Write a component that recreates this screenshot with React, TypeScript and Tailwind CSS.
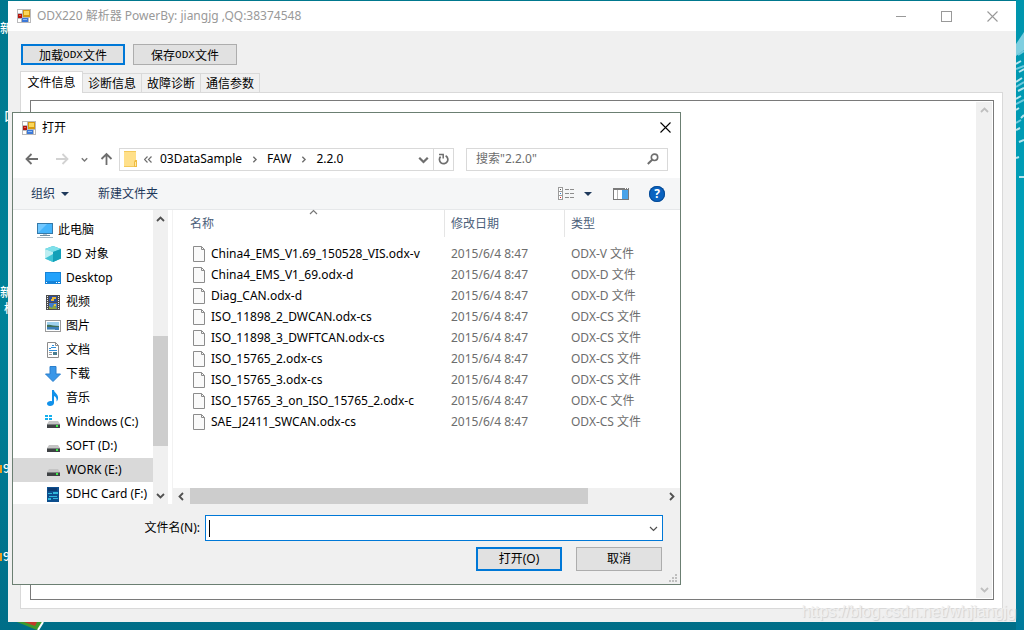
import { useState } from 'react';
import type { ReactNode } from 'react';

const TABS = ['文件信息', '诊断信息', '故障诊断', '通信参数'];

const FILES = [
  { name: 'China4_EMS_V1.69_150528_VIS.odx-v', type: 'ODX-V 文件' },
  { name: 'China4_EMS_V1_69.odx-d', type: 'ODX-D 文件' },
  { name: 'Diag_CAN.odx-d', type: 'ODX-D 文件' },
  { name: 'ISO_11898_2_DWCAN.odx-cs', type: 'ODX-CS 文件' },
  { name: 'ISO_11898_3_DWFTCAN.odx-cs', type: 'ODX-CS 文件' },
  { name: 'ISO_15765_2.odx-cs', type: 'ODX-CS 文件' },
  { name: 'ISO_15765_3.odx-cs', type: 'ODX-CS 文件' },
  { name: 'ISO_15765_3_on_ISO_15765_2.odx-c', type: 'ODX-C 文件' },
  { name: 'SAE_J2411_SWCAN.odx-cs', type: 'ODX-CS 文件' },
];

const MODIFIED = '2015/6/4 8:47';

/* ---------- icons ---------- */

const FormIcon = () => (
  <svg width="14" height="14" viewBox="0 0 14 14" className="shrink-0">
    <rect width="14" height="14" fill="#b9b9bb" />
    <rect x="1" y="1" width="4" height="3" fill="#fff" />
    <rect x="1" y="10" width="3" height="3" fill="#fff" />
    <rect x="12" y="9" width="1" height="4" fill="#fff" />
    <rect x="6" y="1" width="7" height="7" fill="#d69a10" />
    <rect x="7" y="2" width="5" height="4" fill="#fbd75a" />
    <rect x="1" y="5" width="4" height="4" fill="#b3140f" />
    <rect x="2" y="6" width="2" height="1" fill="#e8604f" />
    <rect x="5" y="9" width="6" height="4" fill="#3b78d8" />
    <rect x="6" y="10" width="4" height="1" fill="#8fbcf5" />
  </svg>
);

type ChevronProps = { dir: 'up' | 'down' | 'left' | 'right'; color?: string; size?: number; weight?: number };

const Chevron = ({ dir, color = '#505050', size = 9, weight = 1.8 }: ChevronProps) => {
  const paths = {
    up: 'M1 6 L4.500 2.500 L8 6',
    down: 'M1 3 L4.500 6.500 L8 3',
    left: 'M6 1 L2.500 4.500 L6 8',
    right: 'M3 1 L6.500 4.500 L3 8',
  };
  return (
    <svg width={size} height={size} viewBox="0 0 9 9" className="shrink-0">
      <path d={paths[dir]} fill="none" stroke={color} strokeWidth={weight} />
    </svg>
  );
};

const DoubleChevron = () => (
  <svg width="8" height="7" viewBox="0 0 8 7" className="shrink-0">
    <path d="M3.500 .5l-3 3 3 3M7.500 .5l-3 3 3 3" fill="none" stroke="#6e6e6e" strokeWidth="1.200" />
  </svg>
);

const Caret = () => (
  <svg width="8" height="4" viewBox="0 0 8 4">
    <path d="M0 0h8L4 4z" fill="#1e395b" />
  </svg>
);

const CloseIcon = ({ color }: { color: string }) => (
  <svg width="11" height="11" viewBox="0 0 11 11">
    <path d="M.5 .5l10 10M10.500 .5l-10 10" stroke={color} strokeWidth="1.100" />
  </svg>
);

const NavArrow = ({ dir, color }: { dir: 'left' | 'right' | 'up'; color: string }) => {
  const paths = {
    left: 'M13 7H2M6.500 2L1.500 7l5 5',
    right: 'M0 7h11M6.500 2l5 5-5 5',
    up: 'M6.500 13V2M1.500 7l5-5 5 5',
  };
  return (
    <svg width="13" height="14" viewBox="0 0 13 14">
      <path d={paths[dir]} fill="none" stroke={color} strokeWidth="1.800" />
    </svg>
  );
};

const FolderIcon = () => (
  <svg width="14" height="16" viewBox="0 0 14 16" className="shrink-0">
    <path d="M0 0h12v9l1 1v6H0z" fill="#ffe08a" />
    <path d="M0 0h12v1H0zM0 15h13v1H0z" fill="#f3c95a" />
    <path d="M11 9h2v7h-3v-5z" fill="#f0bd42" />
    <path d="M11 11h1v4h-1z" fill="#ffe9ab" />
  </svg>
);

const RefreshIcon = () => (
  <svg width="11" height="12" viewBox="0 0 11 12">
    <path d="M2.600 3.600A4.200 4.200 0 1 0 7.600 2.800" fill="none" stroke="#6e6e6e" strokeWidth="1.700" />
    <path d="M1 1.500h4.200v4" fill="none" stroke="#6e6e6e" strokeWidth="1.500" />
  </svg>
);

const SearchIcon = () => (
  <svg width="12" height="12" viewBox="0 0 12 12">
    <circle cx="7.500" cy="4.300" r="3.200" fill="none" stroke="#6e6e6e" strokeWidth="1.600" />
    <path d="M5.200 6.800L.8 11" stroke="#6e6e6e" strokeWidth="2" />
  </svg>
);

const ViewIcon = () => (
  <svg width="16" height="13" viewBox="0 0 16 13">
    <rect x=".5" y=".5" width="4" height="12" fill="#fff" stroke="#9b9b9b" />
    <path d="M1 4.500h3M1 8.500h3" stroke="#9b9b9b" />
    <path d="M2 2h1v1H2z" fill="#555" />
    <path d="M2 6h1v1H2z" fill="#2d7dd2" />
    <path d="M2 10h1v1H2z" fill="#e02020" />
    <path d="M7 2.500h4M12 2.500h4M7 6.500h4M12 6.500h4M7 10.500h4M12 10.500h4" stroke="#8d8d8d" />
  </svg>
);

const PreviewIcon = () => (
  <svg width="16" height="12" viewBox="0 0 16 12">
    <rect x=".5" y=".5" width="15" height="11" fill="#fff" stroke="#7a7a7a" />
    <path d="M0 0h16v2H0z" fill="#7a7a7a" />
    <path d="M4.500 2v9" stroke="#b5b5b5" />
    <path d="M9 2h6v9H9z" fill="#4aa3e8" />
    <path d="M12 0h1v1h-1zM14 0h1v1h-1z" fill="#fff" />
  </svg>
);

const FileIcon = () => (
  <svg width="12" height="16" viewBox="0 0 12 16" className="shrink-0">
    <path d="M.5 .5h8l3 3v12H.5z" fill="#fafafa" stroke="#8c8c8c" />
    <path d="M8.500 .5v3h3" fill="none" stroke="#8c8c8c" />
  </svg>
);

const PcIcon = () => (
  <svg width="16" height="15" viewBox="0 0 16 15">
    <rect x=".5" y=".5" width="15" height="10" fill="#45b4fb" stroke="#3579a8" />
    <path d="M1 1h9L1 10z" fill="#72c8ff" />
    <path d="M6 11h4v1H6z" fill="#b9c6cf" />
    <path d="M3 12h10v1H3z" fill="#6f8ea3" />
    <path d="M0 14h16v1H0z" fill="#a8b7c2" />
  </svg>
);

const CubeIcon = () => (
  <svg width="16" height="16" viewBox="0 0 16 16">
    <path d="M8 0l8 3v9.500L8 16l-8-3.500V3z" fill="#29b5cb" />
    <path d="M0 3l8-3 8 3-8 3z" fill="#7fe0ea" />
    <path d="M0 3l8 3v10l-8-3.500z" fill="#bdeef2" />
    <path d="M0 12.500L8 8v8z" fill="#3ec3d5" />
    <path d="M16 3L8 6v10l8-3.500z" fill="#12a0b8" />
  </svg>
);

const DesktopIcon = () => (
  <svg width="16" height="12" viewBox="0 0 16 12">
    <rect width="16" height="12" fill="#1683d8" />
    <path d="M1 1h14v8H1z" fill="#22a2fb" />
    <path d="M1 10h1v1H1zM11 10h1v1h-1zM13 10h2v1h-2z" fill="#fff" />
  </svg>
);

const VideoIcon = () => (
  <svg width="14" height="15" viewBox="0 0 14 15">
    <rect width="14" height="15" fill="#4d4d4d" />
    <path d="M1.500 1v14M12.500 1v14" stroke="#eee" strokeDasharray="1 1" />
    <rect x="3" y="1" width="8" height="6" fill="#2c4f9c" />
    <rect x="3" y="8" width="8" height="6" fill="#3f7bd0" />
    <path d="M6 2h4v2H8v2H5V4h1z" fill="#eab838" />
    <path d="M3 14v-3l3 2 2-4 3 5z" fill="#8fa33a" />
    <path d="M8 9h2v2H8z" fill="#dcc04a" />
  </svg>
);

const PictureIcon = () => (
  <svg width="16" height="12" viewBox="0 0 16 12">
    <rect x=".5" y=".5" width="15" height="11" fill="#fff" stroke="#9a9a9a" />
    <rect x="2" y="2" width="12" height="8" fill="#9ed0ee" />
    <path d="M2 5c3-1 6 1 12 1v1H2z" fill="#3f6f56" />
    <path d="M2 7h12v3H2z" fill="#3d7fb8" />
    <path d="M2 9h8v1H2z" fill="#8db8d4" />
  </svg>
);

const DocIcon = () => (
  <svg width="12" height="16" viewBox="0 0 12 16">
    <path d="M.5 .5h8l3 3v12H.5z" fill="#fff" stroke="#8c8c8c" />
    <path d="M8.500 .5v3h3" fill="none" stroke="#8c8c8c" />
    <path d="M2 6.500h2M5 3.500h2M4 5.500h5M2 8.500h8" stroke="#3190dc" />
    <path d="M2 10.500h3M2 12.500h3" stroke="#999" />
    <path d="M6 10h4v3H6z" fill="#4a7d8f" />
  </svg>
);

const DownloadIcon = () => (
  <svg width="16" height="16" viewBox="0 0 16 16">
    <path d="M5 .5h6V8h4.500L8 15.500.5 8H5z" fill="#3a97e8" stroke="#2b7fcc" />
  </svg>
);

const MusicIcon = () => (
  <svg width="12" height="16" viewBox="0 0 12 16">
    <path d="M5 0h2c0 3 5 4 4 9-.2 1-.8 2-1.500 2.500C10 8.500 9 7 7 6v7c0 2-2 3-4 3s-3-1-3-2.500S2 11 3.500 11c.6 0 1 .1 1.500.2z" fill="#1191ea" />
  </svg>
);

const DriveIcon = ({ system }: { system?: boolean }) => (
  <svg width="16" height="14" viewBox="0 0 16 14">
    {system && (
      <path d="M0 0h3v2H0zM4 0h3v2H4zM0 3h3v2H0zM4 3h3v2H4z" fill="#16b0ee" />
    )}
    <path d="M4 6h9l2 3H2z" fill="#c4c4c4" />
    <rect x="2" y="9" width="13" height="4" fill="#3f4245" />
    <path d="M2 9h13v1H2z" fill="#7b7e80" />
    <path d="M11 10h2v2h-2z" fill="#3df04a" />
  </svg>
);

const CardIcon = () => (
  <svg width="12" height="15" viewBox="0 0 12 15">
    <path d="M0 0h12v15H0z" fill="#0d4f8e" />
    <path d="M1 1h9v3H1z" fill="#0a3a72" />
    <path d="M1 6h4v1H1zM6 5h5v2H6zM2 9h8v1H2zM1 11h3v2H1zM6 11h5v1H6z" fill="#32b8dd" />
  </svg>
);

/* ---------- sidebar ---------- */

const PLACES: { label: string; icon: ReactNode }[] = [
  { label: '3D 对象', icon: <CubeIcon /> },
  { label: 'Desktop', icon: <DesktopIcon /> },
  { label: '视频', icon: <VideoIcon /> },
  { label: '图片', icon: <PictureIcon /> },
  { label: '文档', icon: <DocIcon /> },
  { label: '下载', icon: <DownloadIcon /> },
  { label: '音乐', icon: <MusicIcon /> },
  { label: 'Windows (C:)', icon: <DriveIcon system /> },
  { label: 'SOFT (D:)', icon: <DriveIcon /> },
  { label: 'WORK (E:)', icon: <DriveIcon /> },
  { label: 'SDHC Card (F:)', icon: <CardIcon /> },
];

const Sidebar = () => {
  const [current, setCurrent] = useState('WORK (E:)');

  return (
    <div className="flex h-[294px] w-40 shrink-0 overflow-hidden border-r border-[#f2f2f2]">
      <ul className="h-full w-[140px] shrink-0 overflow-hidden pt-2">
        <li>
          <button className="flex h-6 w-full items-center gap-[5px] pl-6">
            <span className="flex w-4 justify-center"><PcIcon /></span>
            此电脑
          </button>
        </li>
        {PLACES.map((place) => (
          <li key={place.label}>
            <button
              onClick={() => setCurrent(place.label)}
              className={`flex h-6 w-full items-center gap-[5px] pl-8 whitespace-nowrap ${place.label === current ? 'bg-[#d9d9d9]' : ''}`}
            >
              <span className="flex w-4 shrink-0 justify-center">{place.icon}</span>
              {place.label}
            </button>
          </li>
        ))}
      </ul>
      <div className="flex w-[15px] shrink-0 flex-col items-center bg-[#f0f0f0]">
        <button aria-label="向上滚动" className="flex h-[18px] items-center"><Chevron dir="up" /></button>
        <div className="flex-1" />
        <div className="h-[110px] w-full bg-[#cdcdcd]" />
        <div className="h-10" />
        <button aria-label="向下滚动" className="flex h-[18px] items-center"><Chevron dir="down" /></button>
      </div>
    </div>
  );
};

/* ---------- file list ---------- */

const FileList = () => (
  <div className="flex min-w-0 flex-1 flex-col">
    <div className="flex-1">
      <table className="w-full table-fixed border-collapse text-left">
        <colgroup>
          <col className="w-[271px]" />
          <col className="w-[120px]" />
          <col />
        </colgroup>
        <thead className="text-[#4c607a]">
          <tr>
            <th className="p-0 pb-1.5 font-normal">
              <div className="relative flex h-[27px] items-center pl-[17px]">
                名称
                <span className="absolute -top-0.5 left-1/2"><Chevron dir="up" color="#777777" weight={1.2} /></span>
              </div>
            </th>
            <th className="p-0 pb-1.5 font-normal">
              <div className="flex h-[27px] items-center border-l border-[#e5e5e5] pl-1.5">修改日期</div>
            </th>
            <th className="p-0 pb-1.5 font-normal">
              <div className="flex h-[27px] items-center border-l border-[#e5e5e5] pl-1.5">类型</div>
            </th>
          </tr>
        </thead>
        <tbody>
          {FILES.map((file) => (
            <tr key={file.name} className="h-[21px]">
              <td className="p-0 pl-5">
                <div className="flex items-center gap-1.5 whitespace-nowrap">
                  <FileIcon />
                  {file.name}
                </div>
              </td>
              <td className="p-0 pl-[7px] text-[#6d6d6d]">{MODIFIED}</td>
              <td className="p-0 pl-[7px] text-[#6d6d6d]">{file.type}</td>
            </tr>
          ))}
        </tbody>
      </table>
    </div>
    <div className="flex h-4 bg-[#f0f0f0]">
      <button aria-label="向左滚动" className="flex w-[17px] items-center justify-center"><Chevron dir="left" /></button>
      <div className="w-[398px] bg-[#cdcdcd]" />
      <div className="flex-1" />
      <button aria-label="向右滚动" className="flex w-[17px] items-center justify-center"><Chevron dir="right" /></button>
    </div>
  </div>
);

/* ---------- open dialog ---------- */

const OpenDialog = () => {
  const [fileName, setFileName] = useState('');
  const [search, setSearch] = useState('');

  return (
    <div
      role="dialog"
      aria-label="打开"
      className="absolute top-28 left-3 flex w-[669px] flex-col border border-[#6b7f72] bg-white font-['Noto_Sans','Noto_Sans_CJK_SC',sans-serif] text-xs leading-4 text-black"
    >
      <div className="flex h-[29px] items-center gap-1.5 pr-[9px] pl-[9px]">
        <FormIcon />
        <span className="flex-1">打开</span>
        <button aria-label="关闭"><CloseIcon color="#000000" /></button>
      </div>

      <div className="flex h-9 items-center px-3 pb-0.5">
        <button aria-label="后退" className="w-[13px]"><NavArrow dir="left" color="#6e6e6e" /></button>
        <button aria-label="前进" className="ml-[18px] w-[13px]"><NavArrow dir="right" color="#d2d2d2" /></button>
        <button aria-label="最近位置" className="ml-3 w-[7px]"><Chevron dir="down" color="#777777" size={7} /></button>
        <button aria-label="上移" className="ml-3 w-[13px]"><NavArrow dir="up" color="#6e6e6e" /></button>
        <div className="ml-1.5 flex h-[23px] flex-1 items-center border border-[#d9d9d9]">
          <nav className="flex flex-1 items-center pl-1">
            <FolderIcon />
            <span className="mr-2 ml-1.5"><DoubleChevron /></span>
            <a href="#sample">03DataSample</a>
            <span className="mx-[9px]"><Chevron dir="right" size={7} color="#6e6e6e" /></span>
            <a href="#faw">FAW</a>
            <span className="mx-[9px]"><Chevron dir="right" size={7} color="#6e6e6e" /></span>
            <a href="#version">2.2.0</a>
          </nav>
          <button aria-label="历史记录" className="mr-1"><Chevron dir="down" color="#6e6e6e" size={11} /></button>
          <button aria-label="刷新" className="flex h-full w-5 items-center justify-center border-l border-[#d9d9d9]"><RefreshIcon /></button>
        </div>
        <div className="ml-3 flex h-[23px] w-[202px] items-center border border-[#d9d9d9] pr-2 pl-[9px]">
          <input
            type="text"
            aria-label="搜索"
            value={search}
            onChange={(e) => setSearch(e.target.value)}
            placeholder={'搜索"2.2.0"'}
            className="min-w-0 flex-1 outline-none placeholder:text-[#6d6d6d]"
          />
          <SearchIcon />
        </div>
      </div>

      <div className="flex h-8 items-center border-b border-[#e6e8ea] bg-[#f5f6f7] pr-[15px] pl-[18px] text-[#1e395b]">
        <button className="flex items-center gap-1.5">组织 <Caret /></button>
        <button className="ml-[29px]">新建文件夹</button>
        <div className="flex-1" />
        <button aria-label="更改视图"><ViewIcon /></button>
        <button aria-label="更多选项" className="ml-2.5"><Caret /></button>
        <button aria-label="预览窗格" className="ml-[21px]"><PreviewIcon /></button>
        <button aria-label="帮助" className="ml-5 flex size-4 items-center justify-center rounded-full bg-[#0a63c0] font-bold text-white ring-1 ring-inset ring-[#084a94]">
          ?
        </button>
      </div>

      <div className="flex">
        <Sidebar />
        <FileList />
      </div>

      <div className="bg-[#f0f0f0] pr-[17px] pt-[11px]">
        <div className="flex items-center">
          <label htmlFor="file-name" className="w-[187px] text-right">文件名(N):</label>
          <div className="ml-[5px] flex h-[26px] flex-1 items-center border border-[#0078d7] bg-white pr-1 pl-[3px]">
            {!fileName && <span className="h-[17px] w-px bg-black" />}
            <input
              id="file-name"
              type="text"
              value={fileName}
              onChange={(e) => setFileName(e.target.value)}
              className="min-w-0 flex-1 outline-none"
            />
            <Chevron dir="down" weight={1.2} />
          </div>
        </div>
        <div className="mt-1.5 flex justify-end gap-3.5 pr-px">
          <button className="h-6 w-[86px] border-2 border-[#0078d7] bg-[#e1e1e1]">打开(O)</button>
          <button className="h-6 w-[86px] border border-[#adadad] bg-[#e1e1e1]">取消</button>
        </div>
        <div className="-mr-[14px] flex h-[13px] items-end justify-end pb-0.5">
          <svg width="8" height="8" viewBox="0 0 8 8">
            <path d="M6 0h2v2H6zM3 3h2v2H3zM6 3h2v2H6zM0 6h2v2H0zM3 6h2v2H3zM6 6h2v2H6z" fill="#bfbfbf" />
          </svg>
        </div>
      </div>
    </div>
  );
};

/* ---------- desktop behind the windows ---------- */

const Desktop = () => (
  <div className="absolute inset-0 overflow-hidden bg-linear-to-b from-[#00788e] via-[#008299] to-[#006e88] font-['Noto_Sans_CJK_SC',sans-serif] text-xs leading-4 font-medium text-white">
    <div className="absolute inset-y-0 right-0 w-2 bg-linear-to-b from-[#0095ad] via-[#00a3bd] to-[#007a9b]">
      <svg width="8" height="220" viewBox="0 0 8 220">
        <path d="M0 44l8-12v18l-8 6z" fill="#7fcfe0" />
        <path d="M0 64l5-3M3 72l5-3M0 82l6-4M2 91l6-3M0 99l5-3M0 110l3-2M5 118l3-3M0 130l4-2M3 142l5-2M0 158l3-1M3 177h5" stroke="#b8e4ec" strokeWidth="2" />
        <path d="M2 55l6-4M0 69l8-3M0 87l8-5M0 104l8-4M0 123l5-3" stroke="#6fc9dc" strokeWidth="2" />
      </svg>
    </div>
    <span className="absolute top-5 left-0">新</span>
    <span className="absolute top-[284px] left-0">新</span>
    <span className="absolute top-[300px] left-1">档</span>
    <span className="absolute top-[108px] left-1">口</span>
    <span className="absolute top-[460px] left-0"><i className="mr-px inline-block h-2 w-0.5 bg-[#f39b1d]" />9</span>
    <span className="absolute top-[548px] left-0"><i className="mr-px inline-block h-2 w-0.5 bg-[#f39b1d]" />9</span>
    <svg width="28" height="8" viewBox="0 0 28 8" className="absolute bottom-0 left-4">
      <path d="M1 0h26l-6 8z" fill="#3f9a2c" />
      <path d="M8 0h13l-2 4z" fill="#c23a2b" />
      <path d="M22 8l5-8" stroke="#fff" strokeWidth="2" />
    </svg>
  </div>
);

export default function App() {
  const [tab, setTab] = useState(TABS[0]);

  return (
    <div className="relative flex min-h-screen flex-col px-2 pt-px pb-2">
      <Desktop />

      <main className="relative flex flex-1 flex-col bg-[#f0f0f0] font-['Noto_Sans_CJK_SC',sans-serif] text-xs leading-4 text-black">
        <header className="flex h-[30px] items-center bg-white pr-[18px] pl-[9px] font-['Noto_Sans','Noto_Sans_CJK_SC',sans-serif] text-[#999999]">
          <FormIcon />
          <h1 className="ml-1.5 flex-1">ODX220 解析器 PowerBy: jiangjg ,QQ:38374548</h1>
          <button aria-label="最小化" className="flex h-3 w-2.5 items-center"><span className="h-px w-full bg-[#999999]" /></button>
          <button aria-label="最大化" className="ml-[35px] size-[11px] border border-[#999999]" />
          <button aria-label="关闭" className="ml-[35px]"><CloseIcon color="#999999" /></button>
        </header>

        <div className="flex gap-2 px-[13px] pt-[13px]">
          <button className="flex h-[21px] w-[104px] items-center justify-center border-2 border-[#0078d7] bg-[#e1e1e1]">
            加载<span className="font-['Liberation_Mono',monospace] text-[11px]">ODX</span>文件
          </button>
          <button className="flex h-[21px] w-[104px] items-center justify-center border border-[#adadad] bg-[#e1e1e1]">
            保存<span className="font-['Liberation_Mono',monospace] text-[11px]">ODX</span>文件
          </button>
        </div>

        <div className="mt-1.5 flex items-end px-3">
          {TABS.map((name) => (
            <button
              key={name}
              onClick={() => setTab(name)}
              className={
                name === tab
                  ? 'relative z-10 -mb-px h-[22px] w-[63px] border border-b-0 border-[#d9d9d9] bg-white pb-0.5'
                  : 'h-[19px] w-[59px] border border-b-0 border-l-0 border-[#d9d9d9] bg-[#f0f0f0]'
              }
            >
              {name}
            </button>
          ))}
        </div>

        <div className="mr-[13px] mb-[13px] ml-3 flex flex-1 flex-col border border-[#d9d9d9] bg-white px-2 pt-[7px] pb-2">
          <div className="ml-px flex flex-1 border border-[#7a7a7a] p-px">
            <textarea aria-label={tab} className="flex-1 resize-none outline-none" />
            <div className="flex w-4 flex-col items-center justify-between bg-[#f0f0f0] py-1">
              <button aria-label="向上滚动"><Chevron dir="up" color="#bfbfbf" /></button>
              <button aria-label="向下滚动"><Chevron dir="down" color="#bfbfbf" /></button>
            </div>
          </div>
        </div>
      </main>

      <OpenDialog />

      <p className="pointer-events-none absolute right-2 bottom-2 font-['Liberation_Sans',sans-serif] text-base leading-5 text-[#f0f0f0] text-shadow-[1px_1px_1px_#d0d0d0]">
        https://blog.csdn.net/whjiangjg
      </p>
    </div>
  );
}
